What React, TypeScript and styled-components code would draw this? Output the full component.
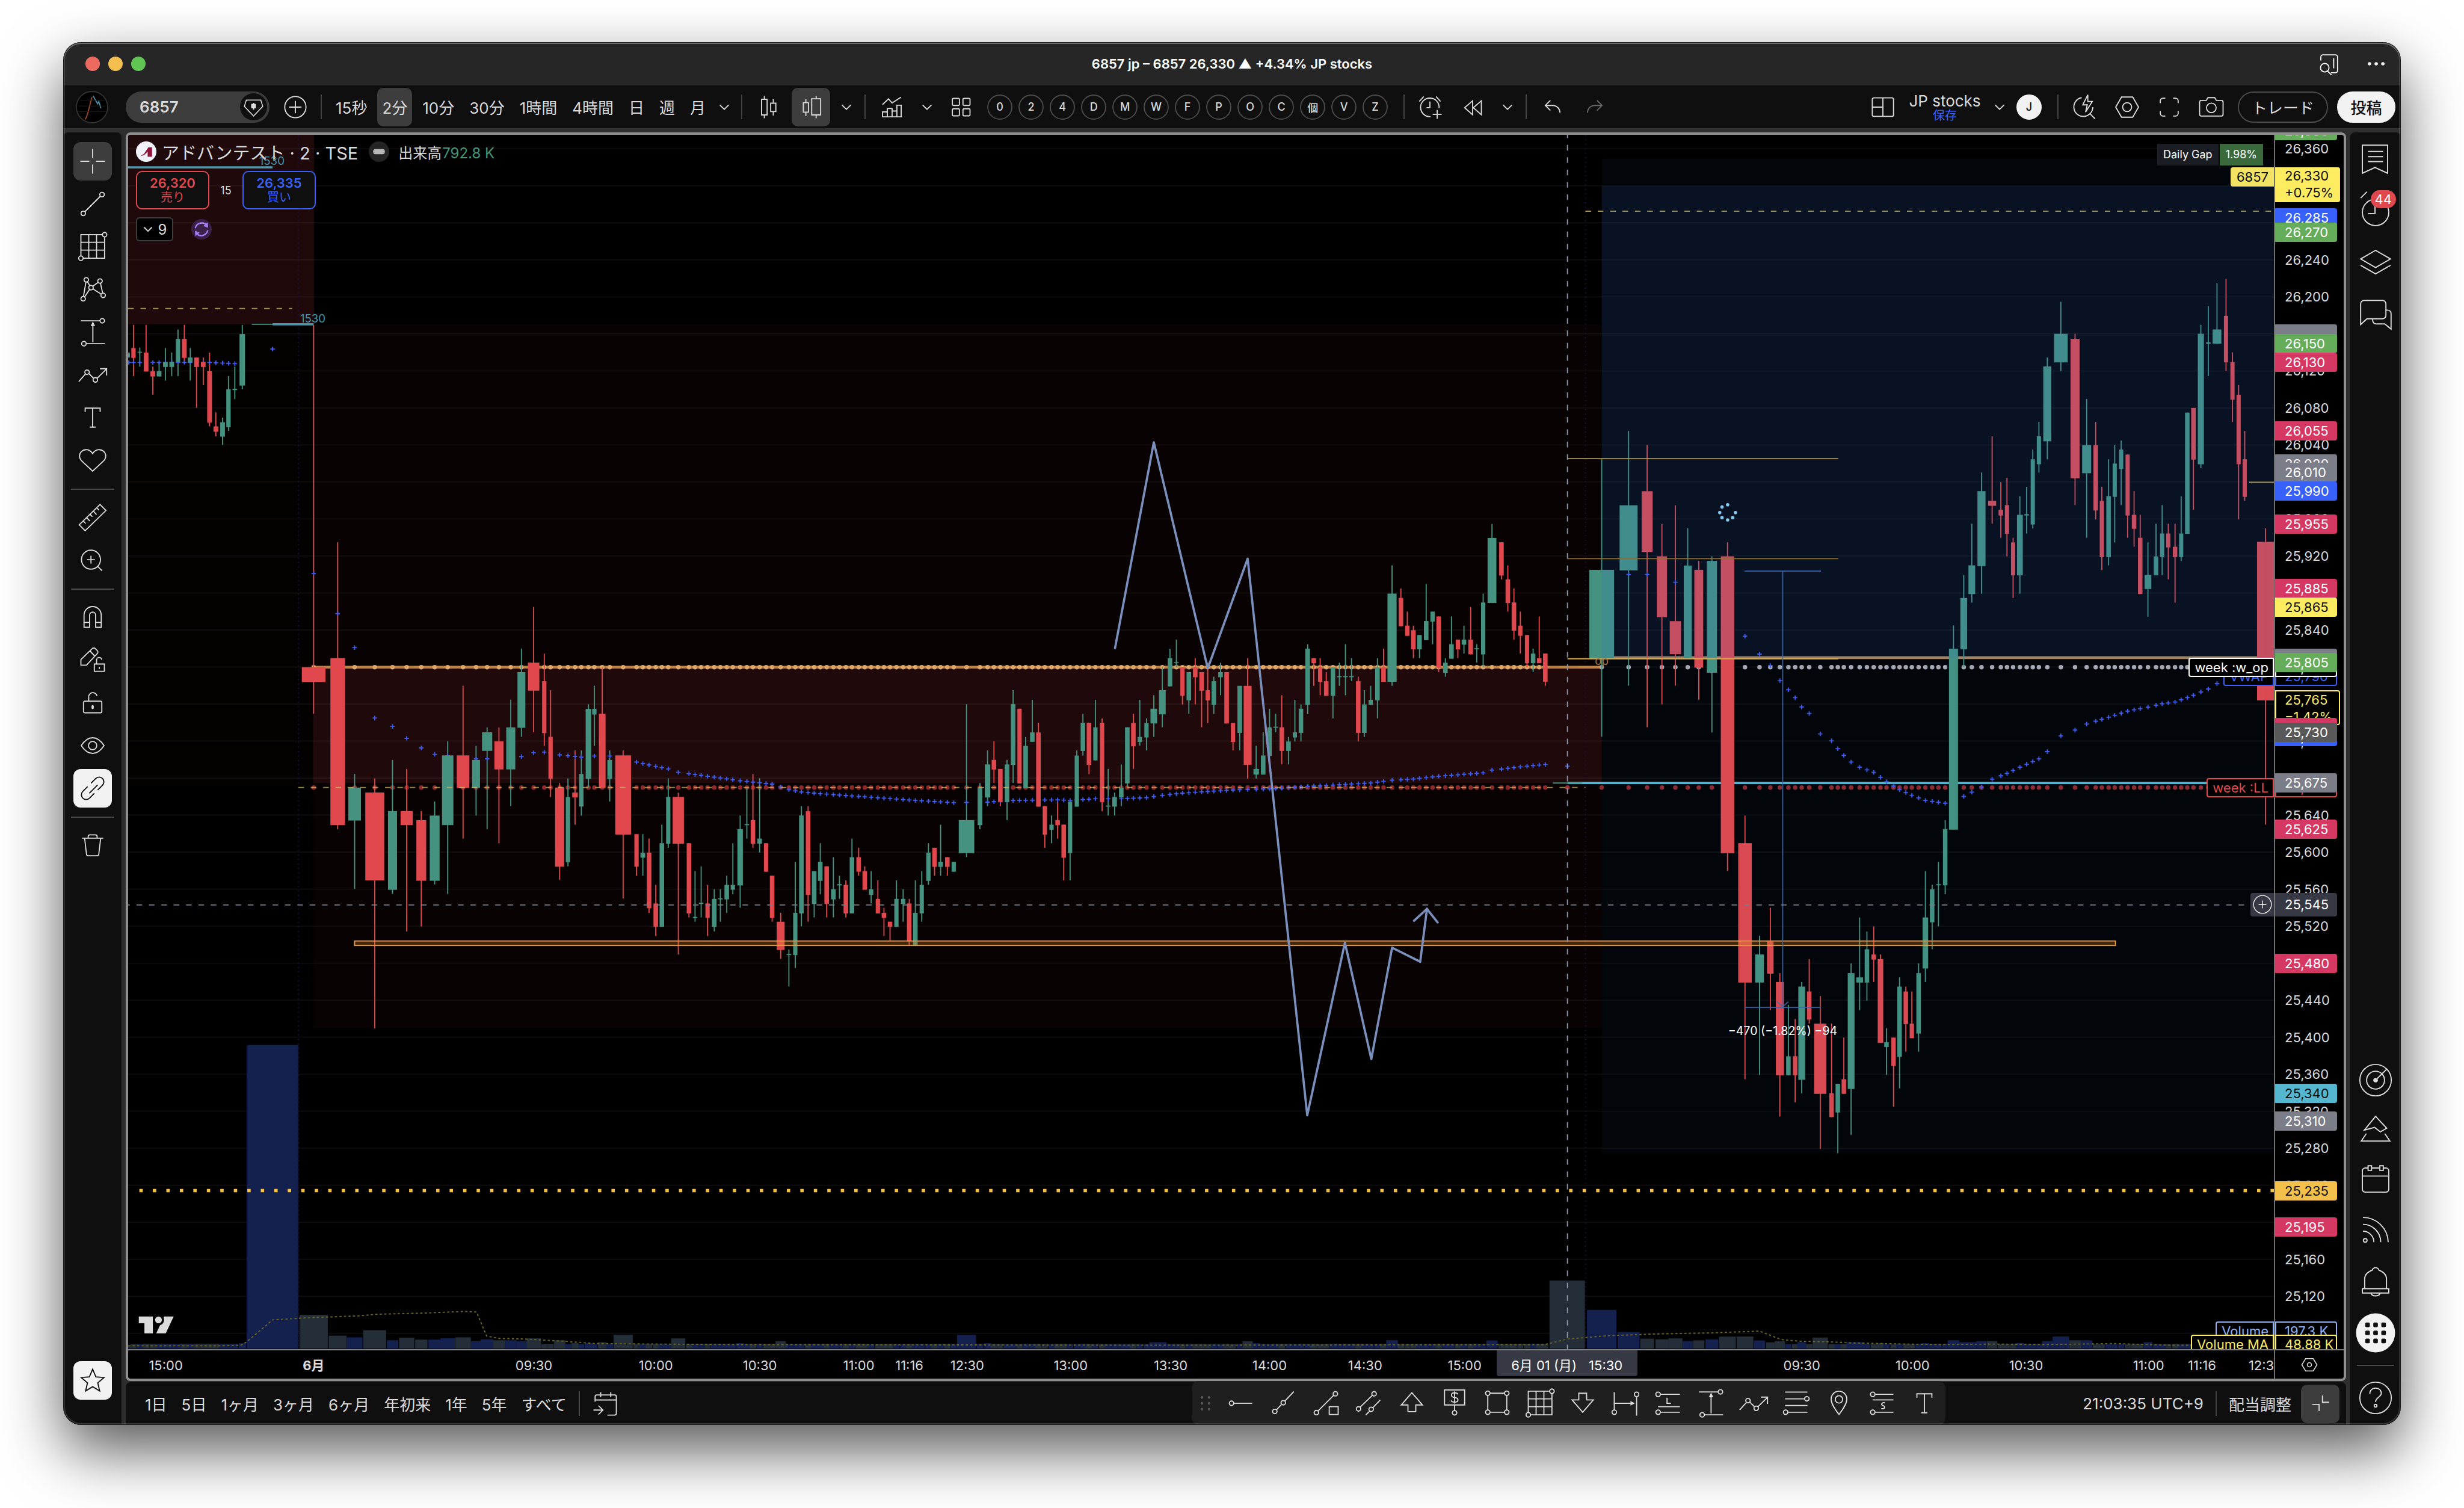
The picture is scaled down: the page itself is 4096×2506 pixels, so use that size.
import React from "react";
import styled, { createGlobalStyle, css } from "styled-components";

const Global = createGlobalStyle`
  * { box-sizing: border-box; }
  html, body { margin: 0; background: #fff; }
  body { font-family: Inter, "Noto Sans CJK JP", sans-serif; color: #dbdbdb; font-size: 26px; }
  button { font: inherit; color: inherit; background: none; border: 0; padding: 0; margin: 0; cursor: pointer; }
`;

/* ---------- shell ---------- */
const Page = styled.div`
  min-height: 100vh;
  padding: 70px 105px 138px;
  display: flex;
  overflow: hidden;
`;
const Window = styled.div`
  flex: 1;
  min-width: 0;
  display: flex;
  flex-direction: column;
  position: relative;
  border-radius: 30px;
  overflow: hidden;
  background: #2e2e2e;
  &::after {
    content: "";
    position: absolute;
    inset: 0;
    border-radius: 30px;
    box-shadow: inset 0 0 0 1px #1a1a1a, inset 0 2px 0 1px #6a6c69, inset 0 0 0 3px rgba(255, 255, 255, 0.14);
    pointer-events: none;
  }
`;
const Shadow = styled.div`
  flex: 1;
  min-width: 0;
  display: flex;
  border-radius: 30px;
  box-shadow: 0 42px 100px rgba(0, 0, 0, 0.66);
`;
const TitleBar = styled.header`
  height: 72px;
  flex: none;
  display: grid;
  grid-template-columns: 1fr auto 1fr;
  align-items: center;
  padding: 0 28px;
  background: #262626;
`;
const Lights = styled.div`
  display: flex;
  gap: 14px;
  padding-left: 9px;
`;
const Light = styled.button<{ $c: string }>`
  width: 24px;
  height: 24px;
  border-radius: 50%;
  background: ${(p) => p.$c};
`;
const Title = styled.h1`
  margin: 0;
  font-size: 22px;
  font-weight: 600;
  color: #fff;
`;
const TitleIcons = styled.div`
  justify-self: end;
  display: flex;
  align-items: center;
  gap: 40px;
  color: #f2f2f2;
`;

/* ---------- top toolbar ---------- */
const Toolbar = styled.nav`
  height: 71px;
  flex: none;
  display: flex;
  align-items: center;
  padding: 0 9px 0 22px;
  background: #0f0f0f;
`;
const Group = styled.div<{ $l?: number; $r?: number; $gap?: number }>`
  display: flex;
  align-items: center;
  gap: ${(p) => p.$gap || 0}px;
  margin-left: ${(p) => p.$l || 0}px;
  margin-right: ${(p) => p.$r || 0}px;
`;
const Push = styled.div`
  flex: 1;
`;
const VLine = styled.span`
  width: 2px;
  height: 41px;
  background: #434343;
  flex: none;
`;
const SymbolPill = styled.button`
  width: 239px;
  height: 52px;
  border-radius: 26px;
  margin-left: 30px;
  padding: 0 4px 0 23px;
  display: flex;
  align-items: center;
  justify-content: space-between;
  background: #3d3d3d;
  font-weight: 600;
`;
const PillGem = styled.span`
  width: 45px;
  height: 45px;
  border-radius: 50%;
  display: grid;
  place-items: center;
  background: #0f0f0f;
`;
const Interval = styled.button<{ $on?: boolean }>`
  height: 64px;
  padding: 0 8px;
  border-radius: 10px;
  background: ${(p) => (p.$on ? "#3d3d3d" : "none")};
`;
const Cell = styled.button<{ $w: number; $on?: boolean; $dim?: boolean }>`
  width: ${(p) => p.$w}px;
  height: 64px;
  flex: none;
  display: flex;
  align-items: center;
  justify-content: center;
  border-radius: 10px;
  background: ${(p) => (p.$on ? "#3d3d3d" : "none")};
  color: ${(p) => (p.$dim ? "#6a6a6a" : "#dbdbdb")};
`;
const Badge = styled.button<{ $solid?: boolean }>`
  width: 42px;
  height: 42px;
  flex: none;
  border-radius: 50%;
  border: 2px solid #4a4a4a;
  font-size: 18px;
  font-weight: 500;
  ${(p) => p.$solid && css`background: #f2f2f2; color: #0f0f0f; border-color: #f2f2f2;`}
`;
const Badges = styled.div`
  display: flex;
  gap: 10px;
`;
const LayoutName = styled.button`
  width: 130px;
  line-height: 28px;
  text-align: center;
  white-space: nowrap;
`;
const SaveText = styled.span`
  display: block;
  font-size: 20px;
  line-height: 20px;
  color: #3861fb;
`;
const PillButton = styled.button<{ $w: number; $solid?: boolean }>`
  width: ${(p) => p.$w}px;
  height: 52px;
  border-radius: 26px;
  border: 2px solid ${(p) => (p.$solid ? "#f2f2f2" : "#4a4a4a")};
  background: ${(p) => (p.$solid ? "#f2f2f2" : "none")};
  color: ${(p) => (p.$solid ? "#0f0f0f" : "#dbdbdb")};
  font-weight: ${(p) => (p.$solid ? 500 : 400)};
`;

/* ---------- body ---------- */
const Main = styled.main`
  flex: 1;
  min-height: 0;
  display: grid;
  grid-template-columns: 97px minmax(0, 1fr) 84px;
  column-gap: 7px;
  padding-top: 7px;
`;
const Rail = styled.aside<{ $top: number; $bottom: number }>`
  display: flex;
  flex-direction: column;
  align-items: center;
  padding: ${(p) => p.$top}px 0 ${(p) => p.$bottom}px;
  background: #0f0f0f;
  border-radius: 8px 8px 0 0;
`;
const Tool = styled.button<{ $on?: "grey" | "white" }>`
  width: 64px;
  height: 64px;
  margin: 3px 0 4px;
  flex: none;
  display: grid;
  place-items: center;
  border-radius: 12px;
  background: ${(p) => (p.$on === "grey" ? "#3d3d3d" : p.$on === "white" ? "#f2f2f2" : "none")};
  color: ${(p) => (p.$on === "white" ? "#0f0f0f" : "#dbdbdb")};
`;
const HLine = styled.span<{ $w: number }>`
  width: ${(p) => p.$w}px;
  height: 2px;
  margin: 11px 0;
  flex: none;
  background: #4a4a4a;
`;
const SideButton = styled.button<{ $h: number }>`
  position: relative;
  width: 84px;
  height: ${(p) => p.$h}px;
  flex: none;
  display: grid;
  place-items: center;
`;
const Count = styled.span`
  position: absolute;
  right: 8px;
  top: 7px;
  height: 30px;
  padding: 0 7px;
  border-radius: 15px;
  font-size: 22px;
  line-height: 30px;
  color: #fff;
  background: #e0484d;
`;
const Center = styled.section`
  min-width: 0;
  display: flex;
  flex-direction: column;
  gap: 2px;
`;
const Chart = styled.div`
  flex: 1;
  min-height: 0;
  display: grid;
  grid-template-columns: minmax(0, 1fr) 116px;
  grid-template-rows: minmax(0, 1fr) 49px;
  border: 4px solid #8f8f8f;
  border-radius: 8px;
  background: #000;
  overflow: hidden;
`;
const Plot = styled.div`
  position: relative;
  overflow: hidden;
`;
const Canvas = styled.svg`
  position: absolute;
  inset: 0;
  width: 100%;
  height: 100%;
`;
const PriceAxis = styled.div`
  position: relative;
  overflow: hidden;
  border-left: 2px solid #6f6f6f;
`;
const TimeAxis = styled.div`
  position: relative;
  overflow: hidden;
  border-top: 2px solid #808080;
`;
const AxisCorner = styled.button`
  display: grid;
  place-items: center;
  border-top: 2px solid #808080;
  border-left: 2px solid #6f6f6f;
`;
const PriceText = styled.span`
  position: absolute;
  left: 16px;
  margin-top: -16px;
  font-size: 22px;
  line-height: 32px;
  white-space: nowrap;
`;
const PriceTag = styled.span<{ $bg: string; $fg?: string; $line?: string; $two?: boolean }>`
  position: absolute;
  left: 0;
  width: ${(p) => (p.$two ? 108 : 103)}px;
  height: ${(p) => (p.$two ? 58 : 32)}px;
  margin-top: ${(p) => (p.$two ? -29 : -16)}px;
  padding-left: ${(p) => (p.$line ? 14 : 16)}px;
  border: ${(p) => (p.$line ? `2px solid ${p.$line}` : "0")};
  border-radius: 0 4px 4px 0;
  background: ${(p) => p.$bg};
  color: ${(p) => p.$fg || "#fff"};
  font-size: 22px;
  line-height: ${(p) => (p.$two ? 28 : p.$line ? 28 : 32)}px;
  white-space: nowrap;
`;
const NameTag = styled.span<{ $c: string; $bg?: string; $fg?: string }>`
  position: absolute;
  right: 0;
  height: 32px;
  margin-top: -16px;
  padding: 0 7px 0 8px;
  border: 2px solid ${(p) => p.$c};
  border-radius: 4px 0 0 4px;
  background: ${(p) => p.$bg || "#000"};
  color: ${(p) => p.$fg || p.$c};
  font-size: 22px;
  line-height: 28px;
  white-space: nowrap;
`;
const AddPrice = styled.button`
  position: absolute;
  right: 0;
  width: 39px;
  height: 39px;
  margin-top: -20px;
  display: grid;
  place-items: center;
  border-radius: 4px 0 0 4px;
  background: #363843;
  color: #fff;
`;
const GapTable = styled.table`
  position: absolute;
  right: 16px;
  top: 15px;
  border-spacing: 2px 0;
  font-size: 18px;
  line-height: 36px;
  color: #fff;
  td, th { font-weight: 400; padding: 0 10px; background: #1b1d24; }
  td { background: #3a6a3c; }
`;
const TimeText = styled.span<{ $bold?: boolean }>`
  position: absolute;
  top: 0;
  width: 120px;
  margin-left: -60px;
  text-align: center;
  font-size: 22px;
  line-height: 50px;
  font-weight: ${(p) => (p.$bold ? 700 : 400)};
`;
const TimeBadge = styled.span`
  position: absolute;
  top: 0;
  width: 234px;
  height: 43px;
  margin-left: -117px;
  padding-top: 6px;
  display: flex;
  gap: 20px;
  justify-content: center;
  font-size: 22px;
  line-height: 39px;
  color: #fff;
  background: #363843;
  border-radius: 0 0 4px 4px;
  white-space: nowrap;
`;
const Legend = styled.div`
  position: absolute;
  left: 13px;
  top: 11px;
  display: flex;
  flex-direction: column;
  align-items: flex-start;
`;
const LegendRow = styled.div<{ $h: number; $gap: number; $mt?: number }>`
  height: ${(p) => p.$h}px;
  margin-top: ${(p) => p.$mt || 0}px;
  display: flex;
  align-items: center;
  gap: ${(p) => p.$gap}px;
  white-space: nowrap;
`;
const SymbolTitle = styled.span`
  font-size: 29px;
  padding-right: 9px;
`;
const Dot = styled.span<{ $bg: string }>`
  width: 34px;
  height: 34px;
  border-radius: 50%;
  display: grid;
  place-items: center;
  background: ${(p) => p.$bg};
`;
const VolText = styled.span`
  font-size: 24px;
  padding-left: 6px;
  b { font-weight: 400; color: #42977c; margin-left: 1px; }
`;
const Quote = styled.button<{ $c: string }>`
  width: 122px;
  height: 64px;
  border: 2px solid ${(p) => p.$c};
  border-radius: 10px;
  background: #0f0f0f;
  color: ${(p) => p.$c};
  font-size: 20px;
  line-height: 24px;
  b { display: block; font-size: 22px; font-weight: 600; }
`;
const Spread = styled.span`
  width: 55px;
  text-align: center;
  font-size: 18px;
`;
const Fold = styled.button`
  width: 62px;
  height: 40px;
  display: flex;
  align-items: center;
  justify-content: center;
  gap: 8px;
  border: 2px solid #3d3d3d;
  border-radius: 6px;
  background: #000;
  font-size: 24px;
`;

/* ---------- bottom bar ---------- */
const BottomBar = styled.footer`
  height: 71px;
  flex: none;
  display: flex;
  align-items: center;
  padding: 0 11px 0 20px;
  background: #0f0f0f;
  border-radius: 8px 8px 0 0;
`;
const Range = styled.button`
  height: 64px;
  padding: 0 12px;
  white-space: nowrap;
`;
const Drawings = styled.div`
  height: 73px;
  margin-top: -2px;
  padding-left: 12px;
  display: flex;
  align-items: center;
  background: #1f1f1f;
  border-radius: 12px;
`;
const Favorite = styled.button`
  width: 71px;
  height: 71px;
  display: grid;
  place-items: center;
`;
const IconSvg = styled.svg<{ $s: number }>`
  display: block;
  flex: none;
  width: ${(p) => p.$s}px;
  height: ${(p) => p.$s}px;
  fill: none;
  stroke: currentColor;
  stroke-width: 1;
  overflow: visible;
`;

/* ---------- icons ---------- */
type IconProps = { d?: string; box?: number; size?: number; c?: [number, number, number][]; children?: React.ReactNode };
const Icon = ({ d, box = 28, size = 52, c = [], children }: IconProps) => (
  <IconSvg $s={size} viewBox={`0 0 ${box} ${box}`} aria-hidden="true">
    {d && <path d={d} />}
    {c.map(([x, y, r], i) => <circle key={i} cx={x} cy={y} r={r} />)}
    {children}
  </IconSvg>
);
const Chevron = () => <Icon d="M10 12l4 4 4-4" />;

const gridTool = <Icon d="M3.5 5v17.5M5.4 24.3h19.3V5M22.7 3.2H3.5V22M10.5 3.2v21M17.5 3.2v21M3.5 10h21.2M3.5 17h21.2" c={[[24.7, 3.2, 2], [3.5, 24.3, 2]]} />;
const measureTool = <Icon d="M3.5 3.8h17M8.3 24.3H25M14.2 23V7" c={[[22.6, 3.8, 2], [6.2, 24.3, 2]]}><path d="M12.2 8.5l2-4 2 4z" fill="currentColor" stroke="none" /></Icon>;
const zigzagTool = <Icon d="M1.5 20l6-6.6M10.5 12.7l4.4 4.4M18 17l8.5-8.3M20.5 8.5h6v6" c={[[9, 11.6, 2], [16.4, 18.5, 2]]} />;
const textTool = <Icon d="M7.3 9V5.5h13.4V9M14 5.5v17M11.3 22.5h5.4" />;

const tools: { label: string; icon: React.ReactNode; on?: "grey" | "white" }[][] = [
  [
    { label: "十字カーソル", on: "grey", icon: <Icon d="M14 3v8M14 17v8M3 14h8M17 14h8" /> },
    { label: "トレンドライン", icon: <Icon d="M7 21L21 7" c={[[5.6, 22.4, 2], [22.4, 5.6, 2]]} /> },
    { label: "フィボナッチ", icon: gridTool },
    { label: "パターン", icon: <Icon d="M8 7.3L5.8 20.3M9.3 7l2.2 3.8M6.7 20.8l4.7-6.9M14 11.3l5-3.8M21 8.4l2 9M14.2 13.5l7.6 4.8" c={[[8.3, 5.4, 2], [5.5, 22.3, 2], [12.5, 12.4, 2], [20.6, 6.5, 2], [23.4, 19.3, 2]]} /> },
    { label: "予測", icon: measureTool },
    { label: "ブラシ", icon: zigzagTool },
    { label: "テキスト", icon: textTool },
    { label: "アイコン", icon: <Icon d="M14 23.7L4.2 14.5C1.6 12 1.7 8.2 4 6.1c3-2.8 7.6-2 10 1.9 2.4-3.9 7-4.7 10-1.9 2.3 2.1 2.4 5.9-.2 8.4z" /> },
  ],
  [
    { label: "計測", icon: <Icon d="M2 20.5L20.6 2.3l5.3 5.4L7.3 25.8zM5.5 17l2.3 2.3M8.5 14l3 3.2M11.5 11l2.3 2.3M14.5 8.2l3 3.2M17.5 5.2l2.3 2.3" /> },
    { label: "ズームイン", icon: <Icon d="M18.5 19.5l4 4M12.5 10v7M9 13.5h7" c={[[12.5, 13.5, 8.5]]} /> },
  ],
  [
    { label: "マグネット", icon: <Icon d="M6.3 22.9V12a7.7 7.7 0 0 1 15.4 0v10.900h-5V12a2.7 2.7 0 0 0-5.4 0v10.900zM6.3 18.5h5M16.7 18.5h5" /> },
    { label: "描画モード", icon: <Icon d="M3.500 18.500v-5L13.500 3.800a2 2 0 0 1 3 0l1.500 1.500a2 2 0 0 1 0 3L8.500 18.500zM11.500 5.800l4.600 4.700M15.500 17.500h9v6.500h-9zM17.500 17.500v-3.300a2.300 2.300 0 0 1 4.600-.5M20 20v2" /> },
    { label: "ロック", icon: <Icon d="M7 12.500h14a1.200 1.200 0 0 1 1.200 1.200v8a1.200 1.200 0 0 1-1.200 1.200H7a1.200 1.200 0 0 1-1.200-1.200v-8A1.200 1.200 0 0 1 7 12.500zM10.500 12.500V9.300a3.700 3.700 0 0 1 7.400-1.300"><rect x="13" y="16" width="2" height="3.6" rx="1" fill="currentColor" stroke="none" /></Icon> },
    { label: "非表示", icon: <Icon d="M3.800 14c3-4.600 6.200-7 10.200-7s7.200 2.400 10.200 7c-3 4.600-6.200 7-10.200 7s-7.200-2.400-10.200-7z" c={[[14, 14, 3.7]]} /> },
    { label: "リンク", on: "white", icon: <Icon d="M11 18.500l7.500-7.500M12.500 9.500l4.300-4.300a4.200 4.200 0 0 1 6 6l-4.300 4.300M15.500 18.500l-4.300 4.300a4.200 4.200 0 0 1-6-6l4.300-4.300" /> },
  ],
  [{ label: "削除", icon: <Icon d="M4.500 7.500h19M10 7.500V6a1.500 1.500 0 0 1 1.500-1.500h5A1.500 1.500 0 0 1 18 6v1.500M6.800 7.500l1.700 14.300a1.500 1.500 0 0 0 1.500 1.400h8a1.500 1.500 0 0 0 1.500-1.400l1.700-14.300" /> }],
];

const favorites: [string, React.ReactNode][] = [
  ["水平レイ", <Icon d="M7.500 14H24" c={[[5.5, 14, 2]]} />],
  ["レイ", <Icon d="M7.500 19.800l4.300-4.500M15 12l8-8.500" c={[[6, 21.3, 2], [13.6, 13.5, 2]]} />],
  ["情報ライン", <Icon d="M6.500 20.800L20.500 6.800M16.500 17h8v7h-8z" c={[[5, 22.3, 2], [22, 5.5, 2]]} />],
  ["平行チャネル", <Icon d="M5.800 17.600L17 6.800M11 24.500l3.500-3.600M17 18.200l7-7.200" c={[[4.5, 19, 2], [18.4, 5.5, 2], [15.8, 19.4, 2]]} />],
  ["上矢印", <Icon d="M14 4.500l9.500 11h-6v6h-7v-6h-6z" />],
  ["価格ノート", <Icon d="M5 2h18v13.500H5zM14 15.500v5M17 6c-.6-1-1.600-1.400-3-1.400-3.700 0-3.700 4 0 4.200 4 .3 4 4.200 0 4.200-1.500 0-2.600-.5-3.200-1.500M14 3.300v11" c={[[14, 22.5, 2]]} />],
  ["長方形", <Icon d="M7.500 5h13M7.500 22h13M5.500 7v13M22.500 7v13" c={[[5.5, 5, 2], [22.5, 5, 2], [5.5, 22, 2], [22.5, 22, 2]]} />],
  ["フィボナッチ", gridTool],
  ["下矢印", <Icon d="M14 22L4.500 11h6V5h7v6h6z" />],
  ["日付範囲", <Icon d="M4 4v16M24 8.500V25M4 14h15" c={[[4, 22, 2], [24, 6, 2]]}><path d="M18.500 12l4 2-4 2z" fill="currentColor" stroke="none" /></Icon>],
  ["ロング", <Icon d="M7 6h17.500M13 9v5h3.500M5 17h19.500M7 22h17.500" c={[[5, 6, 2], [5, 22, 2]]} />],
  ["価格範囲", measureTool],
  ["矢印パス", zigzagTool],
  ["チャネル", <Icon d="M4 4h20M4 10h18M4 16h20M7 22h17" c={[[23.5, 10, 2], [4.5, 22, 2]]} />],
  ["マーカー", <Icon d="M14 24C9.500 18 7 14 7 10.200a7 7 0 0 1 14 0C21 14 18.500 18 14 24z" c={[[14, 10.5, 3.3]]} />],
  ["ショート", <Icon d="M8 6h16.500M6 11h18.500M8 22h16.500M17 13.600c-2.800-.8-4.200 1.600-1.800 2.500s1.800 3.400-1.600 2.500" c={[[6, 6, 2], [6, 22, 2]]} />],
  ["テキスト", textTool],
];

const topSide: [string, React.ReactNode][] = [
  ["ウォッチリスト", <Icon box={44} size={84} d="M10.500 9h22v24.500l-11-5-11 5zM15.500 14.500h13M15.500 19h13M15.500 23.300h13" />],
  ["アラート", <Icon box={44} size={84} d="M21.500 17v6.500h-6M9 10l5.500-5.500M29 4.500L34.500 10" c={[[22, 22.5, 11.5]]} />],
  ["データウィンドウ", <Icon box={44} size={84} d="M22 10.500l13 7.500-13 7.500L9 18zM9 23.500l13 7.500 13-7.500" />],
  ["チャット", <Icon box={44} size={84} d="M12 9h16a3 3 0 0 1 3 3v10a3 3 0 0 1-3 3H14.500L9 30V12a3 3 0 0 1 3-3zM31 17.500h1.500a3 3 0 0 1 3 3V34L30 29.500h-7.500a3 3 0 0 1-3-3V25" />],
];
const bottomSide: [string, React.ReactNode][] = [
  ["スクリーナー", <Icon box={44} size={84} d="M22 22L31.800 12.400" c={[[22, 22, 13.7], [22, 22, 7.8]]}><circle cx="22" cy="22" r="2" fill="currentColor" stroke="none" /></Icon>],
  ["Pine", <Icon box={44} size={84} d="M22 9.500L12.200 21.500l9-2.300 5 3.800 5.500-3.200zM14 24.500L9.500 31h25L30 24.500" />],
  ["カレンダー", <Icon box={44} size={84} d="M15.700 10.500H13a2.500 2.500 0 0 0-2.500 2.500v16A2.500 2.500 0 0 0 13 31.500h18a2.500 2.500 0 0 0 2.500-2.500V13a2.500 2.500 0 0 0-2.500-2.500h-2.300M18.500 10.500h7M10.500 17.500h23M15.500 8.500h3v4h-3zM25.700 8.500h3v4h-3z" />],
  ["ニュース", <Icon box={44} size={84} d="M11 9.500a22 22 0 0 1 22 21.500M11 15.500a15.500 15.500 0 0 1 15.500 15.500M11 21.500a9.500 9.500 0 0 1 9.500 9.500" c={[[13, 29.5, 1.6]]} />],
  ["通知", <Icon box={44} size={84} d="M12.500 27.500v-8.500c0-3.500 2.500-6 6.500-7.500 1-3 5-3 6 0 4 1.500 6.500 4 6.500 7.500v8.500M10.500 27.500h23v3.800h-23zM18 31.500c1 3 7 3 8 0" />],
];

/* ---------- chart data ----------
   Candles come in blocks; each block has its own origin and unit, and a candle is
   [center, body width, high, body top, body bottom, low, rising]. */
type Row = [number, number, number, number, number, number, number];
const blocks: { ox: number; oy: number; sx: number; sy: number; rows: Row[] }[] = [
  { ox: 100, oy: 400, sx: 0.7015, sy: 0.7334, rows: [
    [184,6,310,310,322,322,1],[196,11,243,299,323,367,0],[212,11,298,308,310,344,1],[228,12,243,310,356,356,0],[245,12,344,355,368,412,0],[261,12,333,355,368,368,1],[277,12,299,333,345,378,1],[293,12,310,333,345,367,1],[309,11,254,277,333,367,1],[325,12,243,277,323,332,0],[340,12,299,322,334,378,1],[356,12,322,322,345,444,0],[373,12,322,333,345,389,0],[389,12,310,355,480,489,0],[405,12,455,489,502,513,0],[422,12,468,479,514,534,1],[437,11,367,399,491,500,1],[453,12,344,398,401,423,1],[472,14,243,265,390,399,1],
    [653,60,243,1073,1109,1186,0],[714,37,770,1051,1456,1466,0],[757,32,1332,1365,1445,1611,1],[808,48,1343,1377,1590,1949,0],[853,23,1298,1422,1613,1623,1],[889,31,1320,1422,1456,1714,0],[926,25,1422,1444,1591,1702,0],[960,25,1399,1433,1591,1600,1],[993,29,1253,1287,1456,1623,1],[1032,32,1118,1287,1366,1489,0],[1065,20,1264,1298,1366,1433,1],[1093,26,1219,1231,1276,1466,1],[1123,23,1219,1253,1321,1500,0],[1153,23,1152,1219,1321,1410,1],[1180,20,1028,1085,1220,1242,1],[1211,29,927,1062,1130,1231,0],[1238,11,1040,1107,1233,1264,0],[1254,11,1129,1242,1344,1388,0],[1277,23,1354,1365,1557,1589,0],[1298,11,1343,1388,1546,1556,1],[1316,14,1275,1377,1389,1455,0],[1332,11,1275,1332,1411,1433,1],[1350,14,1163,1174,1344,1365,1],[1365,11,1118,1174,1188,1264,1],[1385,17,1074,1186,1366,1366,0],[1404,12,1275,1298,1344,1399,1],[1438,40,1275,1287,1479,1634,0],[1472,11,1478,1478,1557,1579,0],[1488,12,1478,1523,1535,1579,1],
  ] },
  { ox: 1150, oy: 1050, sx: 0.5421, sy: 0.4783, rows: [
    [9,15,924,976,1183,1200,0],[31,15,1096,1165,1252,1286,0],[51,15,872,941,1252,1252,1],[72,14,700,769,943,958,1],[105,37,753,769,943,1355,0],[140,15,941,941,1202,1217,0],[160,15,1045,1215,1219,1233,1],[180,15,1027,1162,1167,1217,1],[201,14,1096,1165,1219,1286,0],[223,15,1112,1148,1252,1269,1],[243,15,1112,1146,1150,1233,1],[264,15,1062,1096,1150,1200,1],[284,14,941,1096,1114,1131,1],[308,18,838,889,1098,1181,1],[330,15,734,870,874,924,1],[350,15,684,855,943,958,0],[372,15,700,924,943,976,1],[393,14,941,941,1047,1047,0],[413,15,1062,1062,1219,1233,0],[441,26,1200,1233,1338,1371,0],[468,15,1336,1353,1357,1474,1],[489,14,1010,1200,1357,1405,1],[509,15,803,838,1202,1250,1],[531,15,803,822,1133,1233,0],[551,15,1045,1045,1167,1217,1],[571,15,941,1010,1081,1131,1],[592,15,1027,1027,1167,1217,0],[614,15,993,1112,1150,1217,1],[634,15,1062,1093,1098,1148,1],[655,15,1079,1096,1202,1217,0],[675,15,924,993,1202,1202,1],[697,15,958,993,1047,1062,0],[717,15,1027,1045,1114,1114,0],[738,14,1045,1112,1133,1165,1],[760,14,1079,1148,1202,1202,0],[780,15,1181,1200,1219,1286,0],[800,15,1233,1233,1252,1304,0],[821,14,1079,1148,1252,1252,1],[843,14,1112,1148,1167,1233,1],[863,15,1148,1165,1304,1321,0],[883,15,1079,1200,1321,1321,1],[904,14,1045,1096,1202,1233,1],[926,14,941,976,1081,1096,1],[946,15,958,958,1029,1062,0],[966,15,872,1010,1029,1062,1],[988,15,993,993,1029,1062,0],[1009,14,1010,1010,1047,1047,1],[1051,51,424,855,978,993,1],[1095,15,717,735,874,889,1],[1120,18,596,648,771,803,1],[1141,15,562,631,667,717,0],[1162,15,665,665,788,803,0],[1184,15,631,648,788,855,1],[1204,15,372,424,650,717,1],[1225,14,441,441,719,719,0],[1245,15,546,579,736,736,1],[1267,15,408,529,564,564,1],[1287,15,493,529,805,805,0],[1308,14,803,803,909,958,0],[1330,14,838,872,891,941,1],[1350,15,786,855,874,924,0],[1370,15,872,872,995,1079,0],[1391,14,786,786,978,1079,1],[1413,14,596,615,805,805,1],[1433,15,460,493,598,615,1],[1453,15,493,493,650,684,0],[1474,14,408,510,633,633,1],[1496,14,477,493,788,822,0],[1516,15,665,801,805,838,1],[1537,15,753,769,805,838,1],[1559,15,648,735,771,803,1],
  ] },
  { ox: 1950, oy: 750, sx: 0.5421, sy: 0.4783, rows: [
    [103,15,1137,1137,1346,1360,1],[123,15,1087,1121,1208,1292,0],[144,14,1035,1173,1192,1206,1],[166,14,1104,1121,1175,1223,1],[190,22,1018,1068,1123,1173,1],[218,22,914,999,1089,1137,1],[243,15,845,880,985,985,1],[264,15,811,895,899,914,1],[284,14,914,914,1020,1052,0],[305,15,932,932,1037,1087,1],[326,15,880,914,951,1052,0],[347,15,932,932,1001,1137,0],[367,14,897,999,1037,1121,0],[387,15,949,966,1054,1087,1],[409,15,897,932,951,1018,1],[429,15,932,932,1123,1123,0],[450,14,1121,1121,1192,1223,0],[472,15,983,983,1158,1223,1],[498,26,880,983,1277,1328,0],[526,18,1206,1292,1313,1328,1],[549,15,1156,1242,1313,1313,1],[570,14,1068,1137,1244,1244,1],[590,15,1087,1135,1139,1156,1],[610,15,1018,1137,1225,1275,0],[632,15,1173,1190,1225,1275,1],[653,14,1035,1156,1175,1190,1],[673,15,1052,1068,1158,1190,1],[695,15,828,845,1054,1087,1],[715,15,880,880,899,983,0],[736,14,880,914,968,1018,0],[756,15,932,966,1020,1020,0],[778,15,914,914,1020,1104,1],[799,15,897,947,951,983,1],[819,15,828,947,951,1018,1],[839,15,880,947,951,966,1],[861,15,949,966,1158,1190,0],[881,15,999,1052,1158,1173,1],[902,14,983,1035,1054,1054,1],[924,15,880,914,1037,1104,1],[944,15,845,914,968,968,0],[972,30,535,640,968,983,1],[1001,15,621,656,761,761,0],[1022,14,707,759,797,797,0],[1042,15,759,776,847,880,0],[1062,15,794,794,847,880,1],[1084,15,604,742,813,813,1],[1105,14,707,707,744,828,1],[1125,15,725,725,916,932,0],[1147,15,880,897,935,949,1],[1167,15,725,828,882,882,1],[1188,14,811,811,847,880,0],[1208,15,759,811,830,863,1],[1230,15,690,811,866,866,0],[1250,15,828,843,847,897,1],[1271,14,640,673,866,914,1],[1300,29,381,433,675,675,1],[1331,15,449,449,573,587,0],[1352,15,535,587,675,707,0],[1372,15,621,673,778,811,0],[1393,14,707,759,797,863,0],[1415,14,794,794,899,914,0],[1435,15,845,863,899,932,1],[1455,15,725,880,899,899,0],[1475,15,863,863,968,983,0],
  ] },
  { ox: 2750, oy: 700, sx: 0.4783, sy: 0.5102, rows: [
    [209,92,227,615,924,1197,1],[309,67,131,390,617,1019,1],[378,41,180,341,553,1164,0],[433,38,455,568,780,1084,0],[483,42,390,794,909,1019,0],[529,30,470,600,924,924,1],[570,33,584,615,956,1068,0],[619,38,568,584,974,1182,1],[677,50,519,568,1603,1665,0],
  ] },
  { ox: 2950, oy: 1400, sx: 0.4464, sy: 0.5102, rows: [
    [347,54,100,196,682,1019,0],[405,35,519,584,682,1004,1],[448,26,421,538,651,778,0],[486,32,649,680,1005,1149,0],[520,18,760,939,1005,1005,1],[547,18,809,939,1005,1100,0],[573,27,680,696,1021,1068,1],[603,18,600,713,811,825,0],[647,49,729,825,1070,1262,0],[692,18,825,1068,1151,1151,0],[717,18,1035,1035,1135,1277,1],[741,18,874,1019,1070,1070,0],[770,27,615,649,1053,1213,1],[804,27,455,664,682,778,1],[833,18,504,566,682,745,1],[860,18,486,584,602,680,0],[887,22,584,600,892,892,0],[911,18,841,890,907,1004,1],[939,18,874,874,972,1115,0],[963,18,664,696,941,1051,1],[988,18,696,713,827,923,0],[1012,17,713,825,876,876,0],[1039,18,615,649,860,923,1],[1066,22,294,455,633,680,1],[1093,18,341,357,472,566,1],[1118,18,261,339,343,486,1],[1145,18,116,147,343,374,1],[1178,36,-563,-482,149,149,1],
  ] },
  { ox: 3400, oy: 400, sx: 0.574, sy: 0.63776, rows: [
    [164,21,977,1041,1184,1234,1],[189,21,834,950,1030,1054,1],[219,25,691,743,952,1029,1],[252,25,590,770,784,834,0],[279,14,718,795,811,873,0],[298,13,706,782,862,925,0],[317,13,873,886,978,1041,0],[338,18,757,809,978,1029,1],[359,14,731,807,811,861,1],[378,13,627,654,836,847,1],[397,13,550,590,668,691,1],[423,25,370,395,604,654,1],[465,42,215,304,384,408,1],[509,28,304,318,707,782,0],[545,28,486,615,693,873,1],[573,14,550,615,797,822,0],[592,13,731,770,927,963,0],[613,14,654,757,927,950,1],[632,13,615,666,759,886,1],[652,13,602,627,681,782,1],[672,13,641,641,811,873,0],[692,14,743,809,848,898,0],[711,14,809,873,1030,1030,0],[735,21,886,977,1016,1093,1],[760,14,834,925,978,978,1],[779,13,782,861,927,977,1],[798,13,834,861,900,989,0],[819,14,834,898,927,1054,0],[838,13,757,861,927,938,1],[857,14,524,524,862,862,1],[876,14,511,511,655,795,0],[899,19,279,304,668,679,1],[922,14,227,328,332,422,1],[949,27,163,292,332,332,1],[977,13,151,254,384,408,0],[997,13,356,383,488,550,0],[1016,13,447,474,668,822,0],[1035,13,575,654,759,770,0],
  ] },
];
const candles = blocks.flatMap(({ ox, oy, sx, sy, rows }) =>
  rows.map(([x, w, h, t, b, l, up]) => ({ x: ox + x * sx, w: w * sx, h: oy + h * sy, t: oy + t * sy, b: oy + b * sy, l: oy + l * sy, up: !!up })));

const vwap: [number, number][] = [
  [228,645],[373,645],[418,647],[485,621],[558,1020],[601,1092],[631,1152],[667,1278],[698,1292],[724,1314],[750,1331],[773,1342],[847,1350],[867,1350],[928,1346],[950,1339],[968,1338],[996,1343],[1034,1347],[1058,1345],[1085,1345],[1109,1350],[1133,1356],[1155,1361],[1189,1368],[1207,1374],[1259,1381],[1317,1389],[1374,1395],[1404,1405],[1426,1409],[1460,1412],[1516,1416],[1573,1420],[1629,1424],[1697,1428],[1757,1427],[1803,1424],[1882,1423],[1904,1424],[1949,1421],[1995,1421],[2040,1419],[2068,1415],[2104,1411],[2149,1408],[2206,1405],[2270,1403],[2327,1399],[2383,1396],[2439,1393],[2477,1388],[2515,1386],[2560,1381],[2639,1375],[2655,1370],[2717,1363],[2750,1360],[2789,1363],[2850,1022],[2931,1022],[2981,1036],[3022,1060],[3074,1100],[3105,1132],[3131,1164],[3150,1184],[3167,1211],[3182,1227],[3194,1241],[3206,1258],[3219,1269],[3239,1306],[3259,1318],[3270,1332],[3281,1344],[3294,1356],[3309,1365],[3334,1374],[3357,1391],[3380,1405],[3402,1415],[3426,1424],[3461,1429],[3494,1417],[3509,1409],[3526,1400],[3545,1386],[3571,1376],[3594,1365],[3628,1350],[3643,1337],[3667,1309],[3692,1299],[3713,1288],[3752,1276],[3786,1265],[3822,1258],[3847,1252],[3870,1249],[3903,1237],[3916,1231],[3929,1226],[3945,1216],[3961,1210],[4046,1205],
];
const vwapAt = (x: number) => {
  const i = Math.max(1, vwap.findIndex((p) => p[0] >= x));
  const [a, b] = [vwap[i - 1], vwap[i]];
  return a[1] + ((x - a[0]) / (b[0] - a[0])) * (b[1] - a[1]);
};
const plus = (x: number, y: number) => `M${x - 4} ${y}h8M${x} ${y - 4}v8`;
const vwapPath = candles.filter((c) => c.x < 3970).map((c) => plus(c.x, vwapAt(c.x))).join("") + plus(485, 621) + plus(2789, 1363);

const volumeBar = (w: number) => {
  const bw = w * 1.15 + 2;
  return { bw, bh: bw * 0.72 + (bw > 35 ? (bw - 35) ** 2 * 0.1 : 0) };
};
const volumeMa = "228,2394 391,2394 429,2393 439,2387 485,2348 551,2344 636,2341 670,2338 750,2336 827,2333 848,2334 866,2377 888,2381 934,2382 1003,2386 1057,2390 1300,2392 2100,2393 2748,2392 2789,2382 2863,2376 2949,2373 3045,2371 3131,2368 3169,2383 3203,2386 3255,2387 3294,2389 3447,2392 3550,2391 3640,2392 3760,2390 3860,2393 3905,2393";
const gridPrices = Array.from({ length: 33 }, (_, i) => 26360 - i * 40);
const priceY = (p: number) => 264.9 + (26360 - p) * 1.6461;
const main = candles.filter((c) => c.x > 540);
const GREEN = "#44927f";
const RED = "#e0484d";

const PriceCanvas = () => (
  <Canvas viewBox="228 240 3818 2160" preserveAspectRatio="none" role="img" aria-label="6857 チャート">
    <rect x="228" y="577" width="331" height="824" fill="#040101" />
    <rect x="228" y="240" width="331" height="337" fill="#1f090b" />
    <rect x="557" y="577" width="2293" height="1252" fill="#080202" />
    <rect x="557" y="1187" width="2293" height="206" fill="#1f090b" />
    <g stroke="#fff" strokeOpacity=".05" strokeWidth="2">
      {gridPrices.map((p) => <line key={p} x1="228" x2="4046" y1={priceY(p)} y2={priceY(p)} />)}
    </g>
    <rect x="439" y="1859" width="92" height="540" fill="#14214f" />
    <rect x="2757" y="2278" width="63" height="121" fill="#242e38" />
    {candles.map((c, i) => {
      const { bw, bh } = volumeBar(c.w);
      return <rect key={i} x={c.x - bw / 2} y={2399 - bh} width={bw} height={bh} fill={c.up ? "#14214f" : "#242e38"} />;
    })}
    <polyline points={volumeMa} fill="none" stroke="#6b6427" strokeWidth="2" strokeDasharray="4 4" />
    <path d="M531 240V2400M2821 240V2400" stroke="#1d1148" strokeWidth="2" strokeDasharray="2 6" />
    {/* session levels */}
    <path d="M559 1187H2850" stroke="#bb823f" strokeWidth="5" />
    <path d="M2850 1170H4046" stroke="#a88355" strokeWidth="5" />
    <path d="M2789 1393H4046" stroke="#54b7cf" strokeWidth="4" />
    <path d="M2763 1393H2815M448 577H485" stroke={GREEN} strokeWidth="2" />
    <path d="M485 577H558M228 298H485" stroke="#4796aa" strokeWidth="4" />
    <path d="M228 549H520M2821 376H4046" stroke="#a39455" strokeWidth="2" strokeDasharray="10 12" />
    {main.map((c, i) => <circle key={i} cx={c.x} cy="1187" r="4" fill={c.x < 2845 ? "#dca768" : "#a7abb2"} />)}
    {main.map((c, i) => <circle key={i} cx={c.x} cy="1401" r="4" fill="#93282b" />)}
    <circle cx="2789" cy="1401" r="4" fill="#9c3235" />
    {candles.map((c, i) => <rect key={i} x={c.x - 1} y={c.h} width="2" height={c.l - c.h} fill={c.up ? GREEN : RED} />)}
    <path d={vwapPath} stroke="#3d5af1" strokeWidth="2" />
    {candles.map((c, i) => <rect key={i} x={c.x - c.w / 2} y={c.t} width={c.w} height={c.b - c.t} fill={c.up ? GREEN : RED} />)}
    <rect x="4016" y="964" width="30" height="282" fill={RED} />
    <rect x="4030" y="940" width="2" height="527" fill={RED} />
    <rect x="2850" y="282" width="1196" height="1770" fill="#3378e1" fillOpacity=".04" />
    <rect x="2850" y="331" width="1196" height="839" fill="#336cd2" fillOpacity=".13" />
    <path d="M531 1401H2821" stroke="#d8c36a" strokeOpacity=".7" strokeWidth="2" strokeDasharray="10 12" />
    {/* drawings */}
    <path d="M2789 816H3271" stroke="#a8983f" strokeWidth="2" />
    <path d="M2789 994H3271" stroke="#8f6d30" strokeWidth="2" />
    <path d="M2789 1172H3271" stroke="#d9a942" strokeWidth="2" />
    <path d="M4002 858H4046" stroke="#b59f52" strokeWidth="2" />
    <rect x="631" y="1674" width="3133" height="8" fill="#e8963a" fillOpacity=".25" stroke="#e8963a" strokeWidth="2" />
    <path d="M248 2118H4046" stroke="#f3c14b" strokeWidth="6" strokeDasharray="6 18" />
    <polyline points="1984,1153 2053,787 2149,1189 2220,994 2326,1984 2393,1677 2440,1884 2477,1686 2527,1711 2539,1617" fill="none" stroke="#7a8fbc" strokeWidth="4" strokeLinejoin="round" strokeLinecap="round" />
    <path d="M2516 1638L2539 1617L2558 1641" fill="none" stroke="#7a8fbc" strokeWidth="4" strokeLinecap="round" />
    <path d="M3104 1016H3240M3172 1016V1791M3104 1792H3240M3162 1782L3172 1791L3182 1782" fill="none" stroke="#376ab4" strokeOpacity=".85" strokeWidth="2" />
    <g fill="#86c8ee">
      {[[3074,886],[3064,902],[3060,912],[3064,921],[3074,925],[3083,921],[3088,912]].map(([x, y], i) => <circle key={i} cx={x} cy={i === 0 ? 898 : y} r="3" />)}
    </g>
    {/* crosshair */}
    <path d="M2789 236V2400" stroke="#8a93a6" strokeWidth="2" strokeDasharray="10 12" />
    <path d="M221 1610H4004" stroke="#747c8c" strokeWidth="2" strokeDasharray="10 12" />
    <g fill="#4796aa" fontSize="20">
      <text x="461" y="294">1530</text>
      <text x="534" y="574">1530</text>
    </g>
    <text x="2850" y="1183" fill="#a97a45" fontSize="20" textAnchor="middle">op</text>
    <text x="3172" y="1841" fill="#fff" fontSize="21" textAnchor="middle">−470 (−1.82%) −94</text>
    {/* brand mark */}
    <g fill="#dbdbdb" stroke="#000" strokeWidth="8" paintOrder="stroke">
      <path d="M247 2342h25v30h-15v-18h-10zM292 2342h17l-14 30h-17z" />
      <circle cx="282" cy="2348" r="6" />
    </g>
  </Canvas>
);

/* ---------- axes ---------- */
const at = (y: number) => ({ top: `${((y - 240) / 2160) * 100}%` });
const atX = (x: number) => ({ left: `${((x - 228) / 3818) * 100}%` });
const PINK = "#d63864", GREY = "#7b7d88", LEAF = "#66ad5b", BLUE = "#3861fb", SUN = "#fdeb60";
type TagData = { y: number; t: string; bg: string; fg?: string; line?: string };
const tags: TagData[] = [
  { y: 232, t: "26,380", bg: LEAF },
  { y: 388, t: "26,285", bg: BLUE }, { y: 413, t: "26,270", bg: LEAF },
  { y: 594, t: "26,160", bg: GREY }, { y: 603, t: "26,155", bg: GREY }, { y: 611, t: "26,150", bg: LEAF }, { y: 645, t: "26,130", bg: PINK },
  { y: 767, t: "26,055", bg: PINK }, { y: 825, t: "26,020", bg: GREY }, { y: 840, t: "26,010", bg: GREY }, { y: 874, t: "25,990", bg: BLUE },
  { y: 932, t: "25,955", bg: PINK }, { y: 1047, t: "25,885", bg: PINK }, { y: 1080, t: "25,865", bg: SUN, fg: "#0f0f0f" },
  { y: 1203, t: "25,790", bg: "#000", fg: BLUE, line: BLUE }, { y: 1187, t: "25,800", bg: "#000", line: "#fff" }, { y: 1171, t: "25,810", bg: GREY }, { y: 1179, t: "25,805", bg: LEAF },
];
const lowTags: TagData[] = [
  { y: 1310, t: "25,725", bg: BLUE }, { y: 1294, t: "25,735", bg: PINK }, { y: 1303, t: "25,730", bg: "#595959" },
  { y: 1401, t: "25,670", bg: "#000", fg: RED, line: RED }, { y: 1393, t: "25,675", bg: GREY },
  { y: 1475, t: "25,625", bg: PINK }, { y: 1714, t: "25,480", bg: PINK }, { y: 1945, t: "25,340", bg: "#54b7cf", fg: "#0f0f0f" },
  { y: 1994, t: "25,310", bg: GREY }, { y: 2118, t: "25,235", bg: "#f3c14b", fg: "#0f0f0f" }, { y: 2183, t: "25,195", bg: PINK },
  { y: 2368, t: "197.3 K", bg: "#000", fg: "#8fb4f5", line: "#8fb4f5" }, { y: 2391, t: "48.88 K", bg: "#000", fg: SUN, line: SUN },
];
const Tag = ({ y, t, bg, fg, line }: TagData) => <PriceTag $bg={bg} $fg={fg} $line={line} style={at(y)}>{t}</PriceTag>;
const CrossTag = styled(PriceTag)`
  height: 39px;
  margin-top: -20px;
  line-height: 39px;
`;
const times: [number, string][] = [
  [295, "15:00"], [950, "09:30"], [1167, "10:00"], [1352, "10:30"], [1528, "11:00"], [1618, "11:16"], [1721, "12:30"], [1905, "13:00"], [2083, "13:30"], [2259, "14:00"], [2429, "14:30"], [2606, "15:00"],
  [3206, "09:30"], [3403, "10:00"], [3605, "10:30"], [3823, "11:00"], [3918, "11:16"], [4031, "12:30"],
];

export default function App() {
  return (
    <Page>
      <Global />
      <Shadow>
        <Window>
          <TitleBar>
            <Lights>
              <Light $c="#ec6a5e" aria-label="閉じる" />
              <Light $c="#f4bf4f" aria-label="しまう" />
              <Light $c="#61c554" aria-label="拡大" />
            </Lights>
            <Title>6857 jp – 6857 26,330 ▲ +4.34% JP stocks</Title>
            <TitleIcons>
              <button aria-label="タブ検索"><Icon d="M7 11V8a2 2 0 0 1 2-2h11a2 2 0 0 1 2 2v12a2 2 0 0 1-2 2h-4M18.500 9v9M13 20.500l3.500 3.500" c={[[10.5, 17.5, 3.8]]} /></button>
              <button aria-label="メニュー"><Icon size={26}><g fill="currentColor" stroke="none"><circle cx="2" cy="14" r="3" /><circle cx="14" cy="14" r="3" /><circle cx="26" cy="14" r="3" /></g></Icon></button>
            </TitleIcons>
          </TitleBar>

          <Toolbar>
            <button aria-label="プロフィール">
              <Icon><circle cx="14" cy="14" r="14" fill="#000" stroke="#333" /><path d="M8 25c3-6 4-14 6-20" stroke="#a24a26" /><path d="M15 4l4 7 1-2 2 6" stroke="#4a8ca5" /><path d="M1 18h26M3 8h22M2 13h24" stroke="#222" strokeWidth=".5" /></Icon>
            </button>
            <SymbolPill>
              6857
              <PillGem><Icon size={45} d="M6.500 7h15l2 6.500L14 23.500 4.500 13.500z"><path d="M14 10v7" strokeWidth="1.5" /><rect x="11.5" y="11" width="5" height="4.5" fill="currentColor" stroke="none" /></Icon></PillGem>
            </SymbolPill>
            <Cell $w={85} aria-label="比較"><Icon d="M14 8.500v11M8.500 14h11" c={[[14, 14, 9.5]]} /></Cell>
            <VLine />
            <Group $l={15} $gap={9}>
              {["15秒", "2分", "10分", "30分", "1時間", "4時間", "日", "週", "月"].map((t) => <Interval key={t} $on={t === "2分"}>{t}</Interval>)}
              <Cell $w={28} aria-label="その他の足"><Chevron /></Cell>
            </Group>
            <Group $l={14}>
              <VLine />
              <Group $l={12} $gap={6}>
                <Cell $w={64} aria-label="ローソク足"><Icon d="M7.500 7h5v14h-5zM10 4v3M10 21v3M15.700 10.500h4.600v7.500h-4.600zM18 7v3.500M18 18v3.500" /></Cell>
                <Cell $w={64} $on aria-label="出来高ローソク足"><Icon d="M7.200 10h4.600v8.500H7.200zM9.500 7v3M9.500 18.500V22M14.700 6.500h8V21h-8zM18.700 4v2.500M18.700 21v3" /></Cell>
              </Group>
              <Group $l={13} $r={16}><Cell $w={28} aria-label="チャートタイプ"><Chevron /></Cell></Group>
              <VLine />
              <Cell $w={88} aria-label="インジケーター"><Icon d="M5.400 11.700l5.300-5L14 10.300l8-5.200M5.400 22.700v-4.400h4.300v4.400zM9.700 22.700v-7.400H14v7.400zM14 22.700h4.300v-5.200H14M18.300 22.700V12.300h3.800v10.400z" /></Cell>
              <Cell $w={28} aria-label="お気に入り"><Chevron /></Cell>
              <Cell $w={86} aria-label="テンプレート"><Icon d="M7 6.200h4.300a1 1 0 0 1 1 1v4.300a1 1 0 0 1-1 1H7a1 1 0 0 1-1-1V7.200a1 1 0 0 1 1-1zM16.500 6.200h4.300a1 1 0 0 1 1 1v4.300a1 1 0 0 1-1 1h-4.300a1 1 0 0 1-1-1V7.200a1 1 0 0 1 1-1zM7 15.500h4.300a1 1 0 0 1 1 1v4.300a1 1 0 0 1-1 1H7a1 1 0 0 1-1-1v-4.300a1 1 0 0 1 1-1zM16.500 15.500h4.300a1 1 0 0 1 1 1v4.300a1 1 0 0 1-1 1h-4.300a1 1 0 0 1-1-1v-4.300a1 1 0 0 1 1-1z" /></Cell>
              <Badges>{["0", "2", "4", "D", "M", "W", "F", "P", "O", "C", "個", "V", "Z"].map((t) => <Badge key={t}>{t}</Badge>)}</Badges>
            </Group>
            <Group $l={26}>
              <VLine />
              <Cell $w={84} aria-label="アラート"><Icon d="M14 9v5.500h-3M4.500 9l4-4.500M19.500 4.500l4 4.500M14.500 22.500A8.300 8.300 0 1 1 22.200 15M20.500 16.500v8M16.500 20.500h8" /></Cell>
              <Cell $w={60} aria-label="リプレイ"><Icon d="M13.500 8.300v12.500l-7.200-6.300zM21.300 8.300v12.500l-7.200-6.300z" /></Cell>
              <Group $l={13} $r={16}><Cell $w={28} aria-label="リプレイ設定"><Chevron /></Cell></Group>
              <VLine />
              <Group $l={8}>
                <Cell $w={70} aria-label="元に戻す"><Icon d="M12 8l-4.500 4.500L12 17M7.500 12.500h6.500a6.500 6.500 0 0 1 6.500 6.500" /></Cell>
                <Cell $w={70} $dim aria-label="やり直し"><Icon d="M16 8l4.500 4.500L16 17M20.500 12.500H14A6.500 6.500 0 0 0 7.500 19" /></Cell>
              </Group>
            </Group>
            <Push />
            <Group $r={12}>
              <Cell $w={52} aria-label="レイアウト"><Icon d="M6 5.700h16a1.500 1.500 0 0 1 1.500 1.500v13.600a1.500 1.500 0 0 1-1.500 1.500H6a1.500 1.500 0 0 1-1.500-1.500V7.200A1.500 1.500 0 0 1 6 5.700zM14 5.700v16.600M4.500 14H14" /></Cell>
            </Group>
            <LayoutName>JP stocks<SaveText>保存</SaveText></LayoutName>
            <Group $l={12} $r={14}><Cell $w={28} aria-label="レイアウト管理"><Chevron /></Cell></Group>
            <Badge $solid>J</Badge>
            <Group $l={26}><VLine /></Group>
            <Group $l={9} $r={9}>
              <Cell $w={70} aria-label="クイック検索"><Icon d="M11 5.500A8.500 8.500 0 1 0 21 14M18.500 20l4.500 4.500M16.500 3l-4.500 9h4l-1.500 6.500 6-9.500h-4z" /></Cell>
              <Cell $w={70} aria-label="設定"><Icon d="M9 5h10l5.200 9L19 23H9l-5.200-9z" c={[[14, 14, 4]]} /></Cell>
              <Cell $w={70} aria-label="全画面"><Icon d="M6 10.500V8.500A2.500 2.500 0 0 1 8.500 6h2M17.500 6h2A2.500 2.500 0 0 1 22 8.500v2M22 17.500v2a2.500 2.500 0 0 1-2.500 2.500h-2M10.500 22h-2A2.500 2.500 0 0 1 6 19.500v-2" /></Cell>
              <Cell $w={70} aria-label="スナップショット"><Icon d="M5 8h4.500l1.500-2.500h6L18.500 8H23a1.500 1.500 0 0 1 1.500 1.500v11A1.500 1.500 0 0 1 23 22H5a1.500 1.500 0 0 1-1.500-1.500v-11A1.500 1.500 0 0 1 5 8z" c={[[14, 14.7, 4.3]]} /></Cell>
            </Group>
            <Group $gap={15}>
              <PillButton $w={150}>トレード</PillButton>
              <PillButton $w={97} $solid>投稿</PillButton>
            </Group>
          </Toolbar>

          <Main>
            <Rail $top={13} $bottom={38}>
              {tools.map((group, i) => (
                <React.Fragment key={i}>
                  {i > 0 && <HLine $w={72} />}
                  {group.map((t) => <Tool key={t.label} $on={t.on} aria-label={t.label}>{t.icon}</Tool>)}
                </React.Fragment>
              ))}
              <Push />
              <Tool $on="white" aria-label="お気に入り描画"><Icon d="M14 4l2.900 6.800 7.300.6-5.600 4.800 1.700 7.200L14 19.600l-6.300 3.800 1.700-7.200-5.600-4.800 7.300-.6z" /></Tool>
            </Rail>

            <Center>
              <Chart>
                <Plot>
                  <PriceCanvas />
                  <Legend>
                    <LegendRow $h={34} $gap={9}>
                      <Dot $bg="#f0f3fa"><Icon size={34}><path d="M6 20l5-3 6-9h5v13h-6v-7l-5 5z" fill="#8f1238" stroke="none" /></Icon></Dot>
                      <SymbolTitle>アドバンテスト · 2 · TSE</SymbolTitle>
                      <Dot $bg="#242424"><Icon size={34}><rect x="6" y="10.5" width="16" height="7" rx="3" fill="#b8b8b8" stroke="none" /></Icon></Dot>
                      <VolText>出来高<b>792.8 K</b></VolText>
                    </LegendRow>
                    <LegendRow $h={64} $gap={0} $mt={15}>
                      <Quote $c={RED}><b>26,320</b>売り</Quote>
                      <Spread>15</Spread>
                      <Quote $c={BLUE}><b>26,335</b>買い</Quote>
                    </LegendRow>
                    <LegendRow $h={40} $gap={30} $mt={13}>
                      <Fold><Icon size={18}><path d="M4 9l10 10L24 9" strokeWidth="3" /></Icon>9</Fold>
                      <Dot $bg="#3b2149"><Icon size={34}><g stroke="#a27ff2" strokeWidth="2"><path d="M5.500 12.500A9 9 0 0 1 21.500 9M22.500 15.500A9 9 0 0 1 6.500 19" /></g><path d="M22.500 4.500l.5 7.500-6.500-2.500zM5.500 23.500L5 16l6.500 2.500z" fill="#a27ff2" stroke="none" /></Icon></Dot>
                    </LegendRow>
                  </Legend>
                  <GapTable><tbody><tr><th>Daily Gap</th><td>1.98%</td></tr></tbody></GapTable>
                  <NameTag $c="#f2e363" $bg="#f2e363" $fg="#0f0f0f" style={at(315)}>6857</NameTag>
                  <NameTag $c={BLUE} style={at(1203)}>VWAP</NameTag>
                  <NameTag $c="#fff" style={at(1187)}>week :w_op</NameTag>
                  <NameTag $c={RED} style={at(1401)}>week :LL</NameTag>
                  <NameTag $c="#8fb4f5" style={at(2368)}>Volume</NameTag>
                  <NameTag $c={SUN} style={at(2391)}>Volume MA</NameTag>
                  <AddPrice style={at(1610)} aria-label="価格に追加"><Icon size={36} d="M14 9v10M9 14h10" c={[[14, 14, 11.5]]} /></AddPrice>
                </Plot>
                <PriceAxis>
                  {gridPrices.slice(0, 32).map((p) => <PriceText key={p} style={at(priceY(p))}>{p.toLocaleString("en-US")}</PriceText>)}
                  <PriceTag $two $bg={SUN} $fg="#0f0f0f" style={at(329)}>26,330<br />+0.75%</PriceTag>
                  {tags.map((t) => <Tag key={t.t} {...t} />)}
                  <PriceTag $two $bg="#000" $fg={SUN} $line={SUN} style={at(1259)}>25,765<br />−1.42%</PriceTag>
                  {lowTags.map((t) => <Tag key={t.t} {...t} />)}
                  <CrossTag $bg="#363843" style={at(1610)}>25,545</CrossTag>
                </PriceAxis>
                <TimeAxis>
                  {times.map(([x, t]) => <TimeText key={x} style={atX(x)}>{t}</TimeText>)}
                  <TimeText $bold style={atX(558)}>6月</TimeText>
                  <TimeBadge style={atX(2788)}><span>6月 01 (月)</span><span>15:30</span></TimeBadge>
                </TimeAxis>
                <AxisCorner aria-label="スケール設定"><Icon size={44} d="M10 7.500h8l4 6.500-4 6.500h-8L6 14z" c={[[14, 14, 2.2]]} /></AxisCorner>
              </Chart>

              <BottomBar>
                {["1日", "5日", "1ヶ月", "3ヶ月", "6ヶ月", "年初来", "1年", "5年", "すべて"].map((t) => <Range key={t}>{t}</Range>)}
                <Group $l={8}>
                  <VLine />
                  <Cell $w={84} aria-label="日付へ移動"><Icon d="M5 12V7.500A1.500 1.500 0 0 1 6.500 6h16A1.500 1.500 0 0 1 24 7.500v15a1.500 1.500 0 0 1-1.500 1.500H16M5 10.500h19M10 3.500V8M19 3.500V8M3.500 19.500h8M8 15.500l4 4-4 4" /></Cell>
                </Group>
                <Push />
                <Drawings>
                  <Icon size={34}><g fill="#5a5a5a" stroke="none">{[0, 1, 2, 3, 4, 5].map((i) => <circle key={i} cx={4 + (i % 2) * 10} cy={6 + Math.floor(i / 2) * 8} r="1.8" />)}</g></Icon>
                  {favorites.map(([label, icon], i) => <Favorite key={i} aria-label={label}>{icon}</Favorite>)}
                </Drawings>
                <Group $l={216}>
                  <Range>21:03:35 UTC+9</Range>
                  <Group $l={8} $r={8}><VLine /></Group>
                  <Range>配当調整</Range>
                  <Group $l={4}><Cell $w={64} $on aria-label="パネルを開く"><Icon d="M7 14.500h6v6M22 12.500h-6v-6" /></Cell></Group>
                </Group>
              </BottomBar>
            </Center>

            <Rail $top={3} $bottom={3}>
              {topSide.map(([label, icon]) => (
                <SideButton key={label} $h={86} aria-label={label}>
                  {icon}
                  {label === "アラート" && <Count>44</Count>}
                </SideButton>
              ))}
              <Push />
              {bottomSide.map(([label, icon]) => <SideButton key={label} $h={84} aria-label={label}>{icon}</SideButton>)}
              <SideButton $h={84} aria-label="製品">
                <Icon box={44} size={84}><circle cx="22" cy="22" r="17" fill="#f2f2f2" stroke="none" /><g fill="#0f0f0f" stroke="none">{[0, 1, 2, 3, 4, 5, 6, 7, 8].map((i) => <rect key={i} x={13 + (i % 3) * 7} y={13 + Math.floor(i / 3) * 7} width="4" height="4" rx="1" />)}</g></Icon>
              </SideButton>
              <HLine $w={62} />
              <SideButton $h={84} aria-label="ヘルプ"><Icon box={44} size={84} d="M17 18.500c0-3 2-5 5-5s5 1.800 5 4.500c0 3.500-5 3.500-5 7.500" c={[[22, 22, 13.7], [22, 28.8, 1.2]]} /></SideButton>
            </Rail>
          </Main>
        </Window>
      </Shadow>
    </Page>
  );
}
